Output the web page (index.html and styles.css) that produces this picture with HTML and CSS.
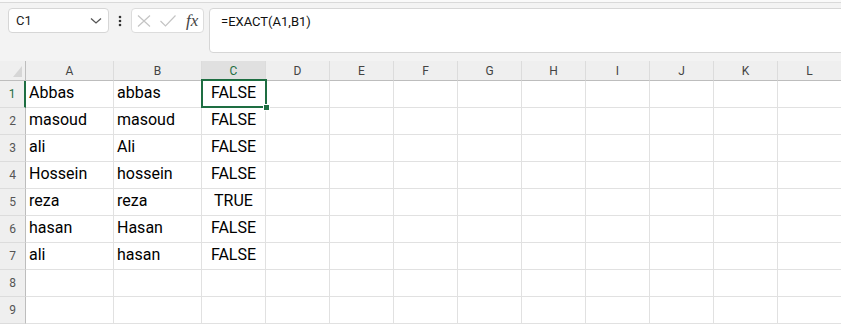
FILE: index.html
```html
<!DOCTYPE html>
<html lang="en">
<head>
    <meta charset="UTF-8">
    <meta name="viewport" content="width=device-width, initial-scale=1.0">
    <title>EXACT</title>
    <link rel="stylesheet" href="styles.css">
</head>
<body>

    <div class="top-strip"></div>

    <div class="formula-bar">
        <div class="name-box">
            <span>C1</span>
            <svg class="chevron" width="12" height="8" viewBox="0 0 12 8"><path d="M1 1.5 L6 6 L11 1.5" fill="none" stroke="#555" stroke-width="1.3"/></svg>
        </div>
        <div class="more">
            <svg width="4" height="12" viewBox="0 0 4 12"><circle cx="2" cy="2" r="1.3" fill="#333"/><circle cx="2" cy="6" r="1.3" fill="#333"/><circle cx="2" cy="10" r="1.3" fill="#333"/></svg>
        </div>
        <div class="fx-box">
            <svg width="14" height="12" viewBox="0 0 14 12"><path d="M1 0.5 L13 11.5 M13 0.5 L1 11.5" stroke="#c4c4c4" stroke-width="1.2"/></svg>
            <svg width="16" height="12" viewBox="0 0 16 12"><path d="M0.5 6 L5.5 11 L15.5 0.5" fill="none" stroke="#c4c4c4" stroke-width="1.2"/></svg>
            <span class="fx">fx</span>
        </div>
        <div class="formula">=EXACT(A1,B1)</div>
    </div>

    <div class="sheet">
        <!-- column headers -->
        <div class="hd corner"><svg width="9" height="11" viewBox="0 0 9 11"><path d="M9 0 L9 11 L0 11 Z" fill="#d6d6d6"/></svg></div>
        <div class="hd">A</div><div class="hd">B</div><div class="hd hd-on">C</div><div class="hd">D</div><div class="hd">E</div><div class="hd">F</div>
        <div class="hd">G</div><div class="hd">H</div><div class="hd">I</div><div class="hd">J</div><div class="hd">K</div><div class="hd">L</div>

        <div class="rh rh-on">1</div><div class="c">Abbas</div><div class="c">abbas</div><div class="c mid">FALSE</div>
        <div class="c"></div><div class="c"></div><div class="c"></div><div class="c"></div><div class="c"></div><div class="c"></div><div class="c"></div><div class="c"></div><div class="c"></div>

        <div class="rh">2</div><div class="c">masoud</div><div class="c">masoud</div><div class="c mid">FALSE</div>
        <div class="c"></div><div class="c"></div><div class="c"></div><div class="c"></div><div class="c"></div><div class="c"></div><div class="c"></div><div class="c"></div><div class="c"></div>

        <div class="rh">3</div><div class="c">ali</div><div class="c">Ali</div><div class="c mid">FALSE</div>
        <div class="c"></div><div class="c"></div><div class="c"></div><div class="c"></div><div class="c"></div><div class="c"></div><div class="c"></div><div class="c"></div><div class="c"></div>

        <div class="rh">4</div><div class="c">Hossein</div><div class="c">hossein</div><div class="c mid">FALSE</div>
        <div class="c"></div><div class="c"></div><div class="c"></div><div class="c"></div><div class="c"></div><div class="c"></div><div class="c"></div><div class="c"></div><div class="c"></div>

        <div class="rh">5</div><div class="c">reza</div><div class="c">reza</div><div class="c mid">TRUE</div>
        <div class="c"></div><div class="c"></div><div class="c"></div><div class="c"></div><div class="c"></div><div class="c"></div><div class="c"></div><div class="c"></div><div class="c"></div>

        <div class="rh">6</div><div class="c">hasan</div><div class="c">Hasan</div><div class="c mid">FALSE</div>
        <div class="c"></div><div class="c"></div><div class="c"></div><div class="c"></div><div class="c"></div><div class="c"></div><div class="c"></div><div class="c"></div><div class="c"></div>

        <div class="rh">7</div><div class="c">ali</div><div class="c">hasan</div><div class="c mid">FALSE</div>
        <div class="c"></div><div class="c"></div><div class="c"></div><div class="c"></div><div class="c"></div><div class="c"></div><div class="c"></div><div class="c"></div><div class="c"></div>

        <div class="rh">8</div><div class="c"></div><div class="c"></div><div class="c"></div>
        <div class="c"></div><div class="c"></div><div class="c"></div><div class="c"></div><div class="c"></div><div class="c"></div><div class="c"></div><div class="c"></div><div class="c"></div>

        <div class="rh">9</div><div class="c"></div><div class="c"></div><div class="c"></div>
        <div class="c"></div><div class="c"></div><div class="c"></div><div class="c"></div><div class="c"></div><div class="c"></div><div class="c"></div><div class="c"></div><div class="c"></div>

        <!-- active cell C1 -->
        <div class="selection"></div>
        <div class="fill-handle"></div>
    </div>

</body>
</html>
```

FILE: styles.css
```css
* {
    box-sizing: border-box;
}

body {
    margin: 0;
    background: #f3f3f3;
    font-family: Roboto, "Liberation Sans", sans-serif;
    overflow: hidden;
}

.top-strip {
    height: 3px;
    background: #f9f9f9;
    border-bottom: 1px solid #d9d9d9;
}

.formula-bar {
    display: flex;
    align-items: flex-start;
    height: 58px;
    padding: 5px 0 0 8px;
}

.name-box {
    width: 101px;
    height: 25px;
    display: flex;
    align-items: center;
    justify-content: space-between;
    padding: 0 6px 0 7px;
    background: #fff;
    border: 1px solid #d6d6d6;
    border-radius: 4px;
    font-size: 13px;
    color: #222;
}

.more {
    width: 22px;
    height: 25px;
    display: flex;
    align-items: center;
    justify-content: center;
}

.fx-box {
    width: 73px;
    height: 25px;
    display: flex;
    align-items: center;
    gap: 9px;
    padding-left: 5px;
    background: #fff;
    border: 1px solid #dcdcdc;
    border-radius: 4px;
}

.fx {
    font-family: "Liberation Serif", serif;
    font-style: italic;
    font-size: 17px;
    color: #444;
    margin-left: 1px;
}

.formula {
    flex: 1;
    height: 45px;
    margin-left: 5px;
    margin-right: -10px;
    padding: 5px 0 0 11px;
    background: #fff;
    border: 1px solid #d6d6d6;
    border-radius: 4px;
    font-size: 13px;
    color: #111;
}

.sheet {
    position: relative;
    display: grid;
    grid-template-columns: 26px 88px 88px repeat(10, 64px);
    grid-template-rows: 20px repeat(9, 27px);
    background: #fff;
}

.hd {
    display: flex;
    align-items: center;
    justify-content: center;
    background: #efefef;
    border-right: 1px solid #dcdcdc;
    border-bottom: 1px solid #bdbdbd;
    font-size: 12px;
    color: #444;
}

.hd-on {
    background: #e0e0e0;
    color: #1e6e42;
}

.corner {
    align-items: flex-end;
    justify-content: flex-end;
    padding: 0 3px 3px 0;
    border-right: 1px solid #bdbdbd;
}

.rh {
    display: flex;
    align-items: center;
    justify-content: center;
    background: #efefef;
    border-right: 1px solid #bdbdbd;
    border-bottom: 1px solid #dcdcdc;
    font-size: 12px;
    color: #555;
}

.rh-on {
    color: #1e6e42;
    border-right: 2px solid #1e6e42;
}

.c {
    height: 27px;
    padding: 0 3px;
    border-right: 1px solid #e1e1e1;
    border-bottom: 1px solid #e1e1e1;
    font-size: 16px;
    line-height: 23px;
    color: #000;
    white-space: nowrap;
    overflow: hidden;
}

.mid {
    text-align: center;
}

.selection {
    position: absolute;
    left: 201px;
    top: 18px;
    width: 66px;
    height: 29px;
    border: 2px solid #1e6e42;
}

.fill-handle {
    position: absolute;
    left: 263px;
    top: 43px;
    width: 7px;
    height: 7px;
    background: #1e6e42;
    border: 1px solid #fff;
}
```
